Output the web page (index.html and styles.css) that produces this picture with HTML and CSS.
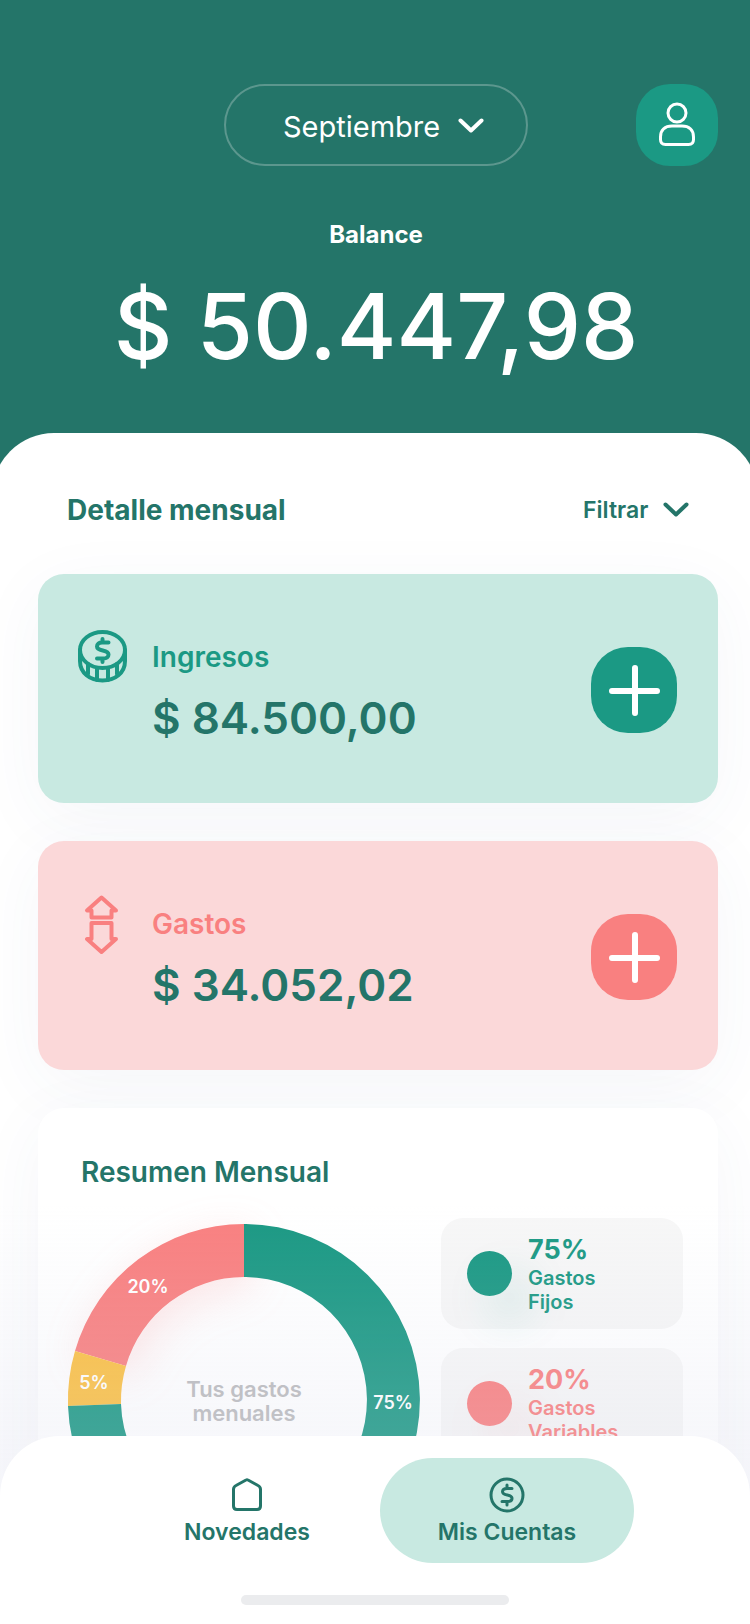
FILE: index.html
```html
<!DOCTYPE html>
<html lang="es">

<head>
    <meta charset="UTF-8">
    <meta name="viewport" content="width=device-width, initial-scale=1.0">
    <title>Mis Cuentas</title>
    <link rel="stylesheet" href="styles.css">
</head>

<body>
    <header class="header">
        <div class="topbar">
            <div class="month">
                <select class="month-select" aria-label="Mes">
                    <option>Septiembre</option>
                </select>
                <svg class="chevron" viewBox="0 0 26 16" aria-hidden="true"><path d="M2.500 2.500l10.500 10L23.500 2.500" /></svg>
            </div>
            <button class="profile" aria-label="Perfil">
                <svg viewBox="0 0 38 46" aria-hidden="true">
                    <circle cx="19" cy="11" r="9" />
                    <path d="M14 24h10c7 0 11.500 4 11.500 11v2.500c0 3-1.500 5-5 5h-23c-3.500 0-5-2-5-5V35c0-7 4.500-11 11.500-11z" />
                </svg>
            </button>
        </div>
        <p class="balance-label">Balance</p>
        <p class="balance">$ 50.447,98</p>
    </header>

    <main class="sheet">
        <div class="sheet-head">
            <h1>Detalle mensual</h1>
            <div class="filter">
                <select class="filter-select" aria-label="Filtrar movimientos">
                    <option>Filtrar</option>
                </select>
                <svg class="chevron" viewBox="0 0 26 16" aria-hidden="true"><path d="M2.500 2.500l10.500 10L23.500 2.500" /></svg>
            </div>
        </div>

        <section class="card card-income">
            <svg class="card-icon" viewBox="0 0 50 54" aria-hidden="true">
                <ellipse cx="24.500" cy="20" rx="22.500" ry="18" />
                <path d="M2 20V31c0 12 10 19.500 22.500 19.500S47 43 47 31V20" />
                <path d="M10 34v10M19 38v12M30 38v12M39 34v10" />
                <path d="M30.500 12.500H24c-3 0-5 1.500-5 4 0 5.500 11.500 2.500 11.500 8 0 2.500-2 4-5 4H19M24.500 9v3.500M24.500 28.500V32" />
            </svg>
            <div class="card-text">
                <h2>Ingresos</h2>
                <p class="amount">$ 84.500,00</p>
            </div>
            <button class="add" aria-label="Agregar ingreso">
                <svg viewBox="0 0 52 52" aria-hidden="true"><path d="M27 4v45M4 27h45" /></svg>
            </button>
        </section>

        <section class="card card-expense">
            <svg class="card-icon" viewBox="0 0 50 60" aria-hidden="true">
                <path d="M23.500 .5L9 13.500h4.500v7h20v-7H38z" />
                <path d="M13.500 26h20v16H38L23.500 55 9 42h4.500z" />
            </svg>
            <div class="card-text">
                <h2>Gastos</h2>
                <p class="amount">$ 34.052,02</p>
            </div>
            <button class="add" aria-label="Agregar gasto">
                <svg viewBox="0 0 52 52" aria-hidden="true"><path d="M27 4v45M4 27h45" /></svg>
            </button>
        </section>

        <section class="summary">
            <h2>Resumen Mensual</h2>
            <div class="summary-body">
                <svg class="donut" viewBox="0 0 352 352">
                    <path class="slice-variable" d="M7 127A176 176 0 0 1 176 0V53A123 123 0 0 0 58 142z" />
                    <path class="slice-other" d="M0 182A176 176 0 0 1 7 127L58 142A123 123 0 0 0 53 180z" />
                    <path class="slice-fixed" d="M176 0A176 176 0 1 1 0 182L53 180A123 123 0 1 0 176 53z" />
                    <text class="slice-label" x="80" y="69">20%</text>
                    <text class="slice-label" x="26" y="165">5%</text>
                    <text class="slice-label" x="325" y="185">75%</text>
                    <text class="donut-title" x="176" y="173">Tus gastos</text>
                    <text class="donut-title" x="176" y="197">menuales</text>
                </svg>
                <ul class="legend">
                    <li class="legend-item fixed">
                        <span class="dot"></span>
                        <div>
                            <strong>75%</strong>
                            <p>Gastos<br>Fijos</p>
                        </div>
                    </li>
                    <li class="legend-item variable">
                        <span class="dot"></span>
                        <div>
                            <strong>20%</strong>
                            <p>Gastos<br>Variables</p>
                        </div>
                    </li>
                </ul>
            </div>
        </section>
    </main>

    <nav class="tabbar">
        <div class="tabs">
            <a class="tab" href="#novedades">
                <svg viewBox="0 0 36 36" aria-hidden="true"><path d="M17 3q1-.6 2 0l10 5.500q2.500 1.200 2.500 4V29q0 3.500-3.500 3.500H8q-3.500 0-3.500-3.500V12.500q0-2.800 2.500-4z" /></svg>
                Novedades
            </a>
            <a class="tab active" href="#cuentas">
                <svg viewBox="0 0 36 36" aria-hidden="true">
                    <circle cx="18" cy="18" r="16" />
                    <path d="M23 11.500h-5c-3 0-4.500 1.200-4.500 3.200 0 4.500 9.500 2.200 9.500 6.500 0 2.200-1.500 3.300-4.500 3.300H13M18 8v3.500M18 24.500V28" />
                </svg>
                Mis Cuentas
            </a>
        </div>
        <div class="home-bar"></div>
    </nav>
</body>

</html>
```
FILE: styles.css
```css
* {
    box-sizing: border-box;
}

body {
    display: flex;
    flex-direction: column;
    margin: 0;
    height: 100vh;
    overflow: hidden;
    font-family: Inter, "Liberation Sans", sans-serif;
    font-weight: 600;
    color: #247569;
    background-color: #247569;
}

/* Difuminado del contenido detrás de la barra inferior */
body::after {
    content: "";
    position: fixed;
    left: 0;
    right: 0;
    bottom: 100px;
    height: 320px;
    background: linear-gradient(rgba(215, 218, 235, 0), rgba(215, 218, 235, 0.22) 80%);
    pointer-events: none;
}

h1,
h2,
p,
ul {
    margin: 0;
    padding: 0;
}

h1,
h2 {
    font-size: 28px;
    line-height: 36px;
    font-weight: 600;
}

h1 {
    font-weight: 700;
}

button,
select {
    font: inherit;
    color: inherit;
    border: none;
    padding: 0;
    background: none;
}

select {
    appearance: none;
}

svg {
    display: block;
    fill: none;
    stroke: currentColor;
    stroke-width: 3;
    stroke-linecap: round;
    stroke-linejoin: round;
}

.chevron {
    width: 26px;
    height: 16px;
    stroke-width: 4;
}

/* Encabezado */
.header {
    flex: none;
    padding: 84px 32px 51px 34px;
    color: #fff;
    text-align: center;
}

.topbar {
    display: grid;
    grid-template-columns: 82px 1fr 82px;
    align-items: center;
}

.month {
    grid-column: 2;
    justify-self: center;
    display: flex;
    align-items: center;
    justify-content: center;
    gap: 17px;
    height: 82px;
    padding: 2px 42px 0 57px;
    border: 2px solid #5c978e;
    border-radius: 41px;
}

.month-select {
    font-size: 29px;
    font-weight: 400;
}

.profile {
    display: flex;
    align-items: center;
    justify-content: center;
    height: 82px;
    border-radius: 34px;
    background-color: #1b9984;
}

.profile svg {
    width: 38px;
    height: 46px;
}

.balance-label {
    margin-top: 53px;
    font-size: 24px;
    line-height: 32px;
    font-weight: 700;
}

.balance {
    margin-top: 19px;
    font-size: 91px;
    line-height: 112px;
    font-weight: 500;
}

/* Contenido */
.sheet {
    flex: 1;
    min-height: 0;
    overflow-y: auto;
    scrollbar-width: none;
    margin: 0 -8px;
    padding: 59px 40px 220px 46px;
    border-radius: 62px 62px 0 0;
    background-color: #fff;
}

.sheet-head {
    display: flex;
    justify-content: space-between;
    align-items: center;
    padding: 0 29px;
    margin-bottom: 46px;
}

.filter {
    display: flex;
    align-items: center;
    gap: 14px;
    font-size: 23px;
}

.card {
    display: flex;
    align-items: flex-start;
    height: 229px;
    margin-bottom: 38px;
    padding: 56px 41px 0 40px;
    border-radius: 26px;
    box-shadow: 0 16px 70px rgba(60, 70, 130, 0.05);
}

.card-icon {
    width: 50px;
    flex: none;
    overflow: visible;
    stroke-width: 4;
}

.card-text {
    flex: 1;
    padding: 9px 0 0 24px;
}

.amount {
    margin-top: 15px;
    font-size: 44px;
    line-height: 56px;
    color: #247569;
}

.add {
    display: flex;
    align-items: center;
    justify-content: center;
    width: 86px;
    height: 86px;
    margin-top: 17px;
    border-radius: 37px;
    color: #fff;
}

.add svg {
    width: 52px;
    height: 52px;
    stroke-width: 6;
}

.card-income {
    color: #1b9984;
    background-color: #c8e9e1;
}

.card-income .add {
    background-color: #1b9984;
}

.card-expense {
    color: #f98080;
    background-color: #fbd8d9;
}

.card-expense .add {
    background-color: #f98080;
}

/* Resumen */
.summary {
    padding: 46px 35px 40px 30px;
    border-radius: 26px;
    background-color: #fff;
    box-shadow: 0 16px 70px rgba(60, 70, 130, 0.05);
}

.summary h2 {
    padding-left: 13px;
}

.summary-body {
    display: grid;
    grid-template-columns: 352px 1fr;
    gap: 21px;
    margin-top: 28px;
}

.donut {
    width: 352px;
    height: 352px;
    margin-top: 6px;
    stroke: none;
    overflow: visible;
}

.slice-fixed {
    fill: #1b9984;
}

.slice-variable {
    fill: #f98080;
    filter: drop-shadow(6px 10px 20px rgba(249, 128, 128, 0.2));
}

.slice-other {
    fill: #fbc044;
}

.slice-label {
    fill: #fff;
    font-size: 18px;
    text-anchor: middle;
}

.donut-title {
    fill: #bcbcbe;
    font-size: 22px;
    text-anchor: middle;
}

.legend {
    display: flex;
    flex-direction: column;
    gap: 19px;
    list-style: none;
}

.legend-item {
    display: flex;
    align-items: center;
    gap: 16px;
    height: 111px;
    padding-left: 26px;
    border-radius: 22px;
    background-color: #f7f7f7;
    font-size: 20px;
    line-height: 24px;
}

.legend-item strong {
    font-size: 27px;
    line-height: 32px;
    font-weight: 700;
}

.dot {
    width: 45px;
    height: 45px;
    border-radius: 50%;
    background-color: currentColor;
}

.fixed {
    color: #1b9984;
}

.fixed .dot {
    box-shadow: 20px 24px 44px rgba(27, 153, 132, 0.15);
}

.variable {
    color: #f98080;
}

.variable .dot {
    box-shadow: 20px 24px 44px rgba(249, 128, 128, 0.15);
}

/* Barra inferior */
.tabbar {
    position: fixed;
    z-index: 1;
    left: 0;
    right: 0;
    bottom: 0;
    padding: 22px 0 19px;
    border-radius: 60px 60px 0 0;
    background-color: #fff;
}

.tabs {
    display: grid;
    grid-template-columns: 254px 254px;
    justify-content: center;
    gap: 6px;
    padding-left: 4px;
}

.tab {
    display: flex;
    flex-direction: column;
    align-items: center;
    gap: 3px;
    height: 105px;
    padding-top: 19px;
    border-radius: 53px;
    color: #247569;
    font-size: 23px;
    line-height: 32px;
    text-decoration: none;
}

.tab svg {
    width: 36px;
    height: 36px;
}

.tab.active {
    background-color: #c8e9e1;
}

.home-bar {
    width: 268px;
    height: 10px;
    margin: 32px auto 0;
    border-radius: 5px;
    background-color: #ebecee;
}
```
